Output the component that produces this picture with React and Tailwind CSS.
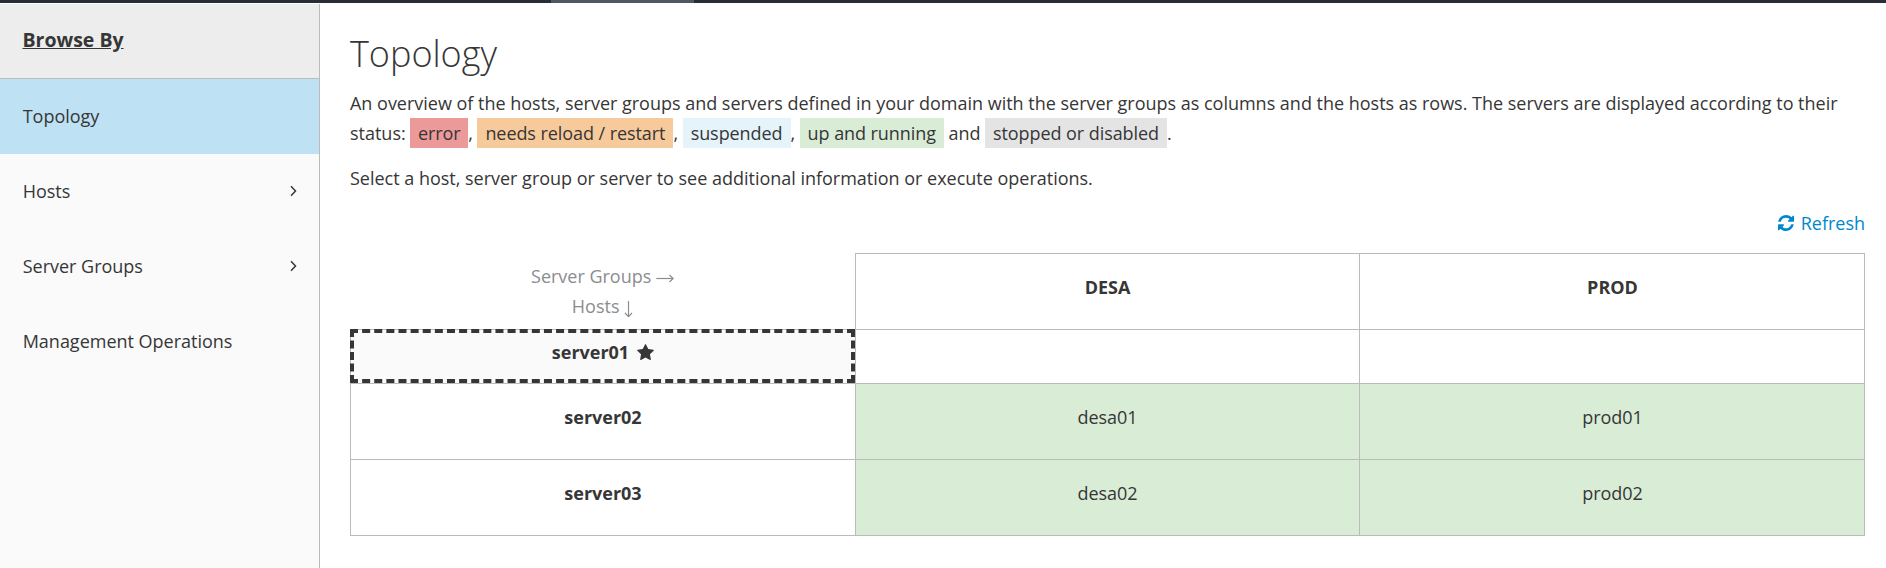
const items = [
  { label: 'Topology', active: true },
  { label: 'Hosts', arrow: true },
  { label: 'Server Groups', arrow: true },
  { label: 'Management Operations' },
];

function Chevron() {
  return (
    <svg className="mr-[22px] h-3 w-[7px]" viewBox="0 0 7 12" fill="none" stroke="#363636" strokeWidth="1.5">
      <path d="M1 1.3 5.5 6 1 10.7" />
    </svg>
  );
}

function RefreshIcon() {
  return (
    <svg className="h-4 w-4" viewBox="0 0 1536 1536" fill="#0088ce">
      <path d="M1511 928q0 5-1 7-64 268-268 434.500T764 1536q-146 0-282.500-55T238 1324l-129 129q-19 19-45 19t-45-19-19-45V960q0-26 19-45t45-19h448q26 0 45 19t19 45-19 45l-137 137q71 66 161 102t187 36q134 0 250-65t186-179q11-17 53-117 8-23 30-23h192q13 0 22.500 9.500t9.500 22.500zm25-800v448q0 26-19 45t-45 19h-448q-26 0-45-19t-19-45 19-45l138-138Q969 256 768 256q-134 0-250 65T332 500q-11 17-53 117-8 23-30 23H50q-13 0-22.500-9.500T18 608v-7q65-268 270-434.500T768 0q146 0 284 55.500T1297 212l130-129q19-19 45-19t45 19 19 45z" />
    </svg>
  );
}

function StarIcon() {
  return (
    <svg className="mt-[7px] ml-2 h-4 w-[17px]" viewBox="64 30 1664 1589" fill="#363636">
      <path d="M1728 647q0 22-26 48l-363 354 86 500q1 7 1 20 0 21-10.500 35.500t-30.500 14.500q-19 0-40-12l-449-236-449 236q-22 12-40 12-21 0-31.500-14.500t-10.500-35.500q0-6 2-20l86-500-364-354q-25-27-25-48 0-37 56-46l502-73 225-455q19-41 49-41t49 41l225 455 502 73q56 9 56 46z" />
    </svg>
  );
}

function ArrowRight() {
  return (
    <svg className="inline-block h-[30px] w-[18px] align-top" viewBox="0 0 18 30" fill="none" stroke="#8b8d8f" strokeWidth="1.2">
      <path d="M0.300 17.500H17" />
      <path d="M13.500 14 17.200 17.500 13.500 21" />
    </svg>
  );
}

function ArrowDown() {
  return (
    <svg className="inline-block h-[30px] w-[9px] align-top" viewBox="0 0 9 30" fill="none" stroke="#8b8d8f" strokeWidth="1.2">
      <path d="M4.500 10V25.500" />
      <path d="M1 22 4.500 25.600 8 22" />
    </svg>
  );
}

function Tag({ className, children }) {
  return (
    <span className={`-ml-[0.15px] inline-block text-center tracking-[-0.07px] whitespace-nowrap ${className}`}>{children}</span>
  );
}

function Cell({ className = '', children }) {
  return <div className={`border-r border-b border-[#bbb] text-center ${className}`}>{children}</div>;
}

export default function App() {
  return (
    <div className="flex h-[568px] w-[1886px] flex-col overflow-hidden bg-white font-['Open_Sans',sans-serif] text-[18px] leading-[30px] tracking-[-0.012px] text-[#363636]">
      <div className="flex h-[3px] shrink-0 bg-[#292e34]">
        <div className="ml-[551px] w-[143px] bg-[#4f5765]" />
      </div>
      <div className="mt-px flex flex-1">
        <nav className="w-80 shrink-0 border-r border-[#bbb] bg-[#fafafa]">
          <h2 className="h-[75px] border-b border-[#bbb] bg-[#ededed] pt-[21px] pl-[22.5px] text-[19.5px] font-bold underline">
            Browse By
          </h2>
          {items.map((item) => (
            <div
              key={item.label}
              className={`flex h-[75px] items-center justify-between pb-px pl-[22.7px] ${item.active ? 'bg-[#bee1f4]' : ''}`}
            >
              <span>{item.label}</span>
              {item.arrow && <Chevron />}
            </div>
          ))}
        </nav>
        <main className="flex-1 pt-[30px] pr-[21px] pl-[30px]">
          <h1 className="text-[36px] leading-10 font-light">Topology</h1>
          <p className="mt-[14px]">
            An overview of the hosts, server groups and servers defined in your domain with the server groups as columns and the hosts as rows. The servers are displayed according to their
            <br />
            status: <Tag className="w-[58px] bg-[#ec9999]">error</Tag>,{' '}
            <Tag className="w-[196px] bg-[#f7ca9b]">needs reload / restart</Tag>,{' '}
            <Tag className="w-[108px] bg-[#e5f3fb]">suspended</Tag>,{' '}
            <Tag className="w-[144px] bg-[#d9ecd6]">up and running</Tag> and{' '}
            <Tag className="w-[182px] bg-[#e4e4e4]">stopped or disabled</Tag>.
          </p>
          <p className="mt-[15px]">Select a host, server group or server to see additional information or execute operations.</p>
          <div className="mt-[15px] flex items-center justify-end gap-[7px] text-[#0088ce]">
            <RefreshIcon />
            <span>Refresh</span>
          </div>
          <div className="mt-[15px] grid grid-cols-[506px_504px_505px] grid-rows-[77px_54px_76px_76px]">
            <div className="border-r border-r-[#bbb] pt-2 text-center text-[#8b8d8f]">
              Server Groups <ArrowRight />
              <br />
              Hosts <ArrowDown />
            </div>
            <Cell className="border-t pt-[18px] font-bold">DESA</Cell>
            <Cell className="border-t pt-[18px] pl-px font-bold">PROD</Cell>
            <Cell className="-mt-px">
              <div className="flex h-full justify-center border-t border-l border-[#bbb] bg-[#fafafa] pt-[7px] font-bold outline-4 -outline-offset-4 outline-dashed outline-[#363636]">
                <span>server01</span>
                <StarIcon />
              </div>
            </Cell>
            <Cell />
            <Cell />
            <Cell className="border-l pt-[18px] font-bold">server02</Cell>
            <Cell className="bg-[#d9ecd6] pt-[18px]">desa01</Cell>
            <Cell className="bg-[#d9ecd6] pt-[18px] pl-px">prod01</Cell>
            <Cell className="border-l pt-[18px] font-bold">server03</Cell>
            <Cell className="bg-[#d9ecd6] pt-[18px]">desa02</Cell>
            <Cell className="bg-[#d9ecd6] pt-[18px] pl-px">prod02</Cell>
          </div>
        </main>
      </div>
    </div>
  );
}
